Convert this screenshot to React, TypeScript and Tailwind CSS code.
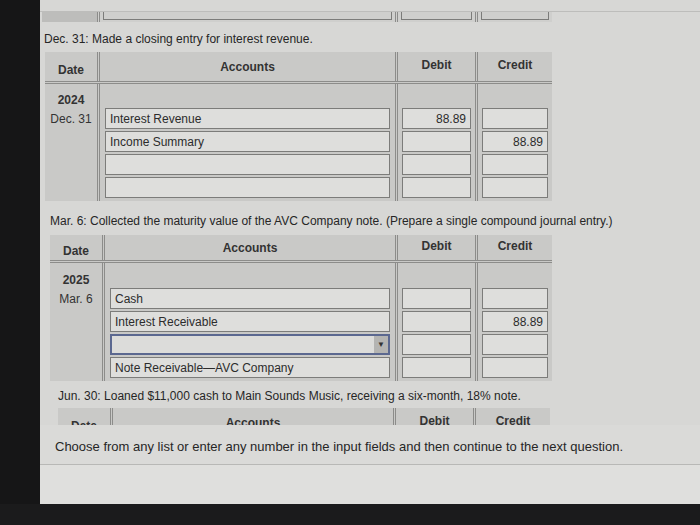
import React from "react";

type Row = { account?: string; debit?: string; credit?: string; select?: boolean };

const font = { fontFamily: '"Liberation Sans", Arial, sans-serif' };

function Field({ value, align = "left", select = false }: { value?: string; align?: "left" | "right"; select?: boolean }) {
  if (select) {
    return (
      <div className="flex h-[21px] w-full items-stretch border-2 border-[#5b6890] bg-[#dcdcda]">
        <div className="flex-1" />
        <div className="flex w-[14px] items-center justify-center bg-[#b4b4b2] text-[8px] text-[#333]">▼</div>
      </div>
    );
  }
  return (
    <div
      className={`flex h-[21px] w-full items-center border border-[#7c7c7a] bg-[#dededc] px-[4px] text-[12px] text-[#2c2c2c] ${
        align === "right" ? "justify-end" : "justify-start"
      }`}
    >
      {value}
    </div>
  );
}

function Header({ tall = false }: { tall?: boolean }) {
  return (
    <div
      className={`flex ${tall ? "h-[32px]" : "h-[28px]"} border-b-[3px] border-double border-[#8c8c8a] text-[12px] font-bold text-[#333]`}
    >
      <div className="flex w-[52px] items-center justify-center pt-[6px]">Date</div>
      <div className="flex flex-1 items-center justify-center border-l-[3px] border-double border-[#8c8c8a]">Accounts</div>
      <div className="flex w-[80px] items-center justify-center border-l-[3px] border-double border-[#8c8c8a] pb-[4px]">Debit</div>
      <div className="flex w-[77px] items-center justify-center border-l-[3px] border-double border-[#8c8c8a] pb-[4px]">Credit</div>
    </div>
  );
}

function Journal({
  year,
  date,
  rows,
  className,
  tall = false,
}: {
  year: string;
  date: string;
  rows: Row[];
  className: string;
  tall?: boolean;
}) {
  const top = tall ? "pt-[23px]" : "pt-[24px]";
  return (
    <div className={`bg-[#c9c9c7] ${className}`} style={font}>
      <Header tall={tall} />
      <div className="flex">
        <div className={`flex w-[52px] flex-col items-center text-[12px] text-[#333] ${tall ? "pt-[9px]" : "pt-[10px]"}`}>
          <div className="flex h-[14px] items-center font-bold">{year}</div>
          <div className="flex h-[23px] items-center">{date}</div>
        </div>
        <div className={`flex flex-1 flex-col border-l-[3px] border-double border-[#8c8c8a] px-[5px] pb-[2px] ${top}`}>
          {rows.map((r, i) => (
            <div key={i} className="flex h-[23px] items-center">
              <Field value={r.account} select={r.select} />
            </div>
          ))}
        </div>
        <div className={`flex w-[80px] flex-col border-l-[3px] border-double border-[#8c8c8a] px-[4px] pb-[2px] ${top}`}>
          {rows.map((r, i) => (
            <div key={i} className="flex h-[23px] items-center">
              <Field value={r.debit} align="right" />
            </div>
          ))}
        </div>
        <div className={`flex w-[77px] flex-col border-l-[3px] border-double border-[#8c8c8a] px-[4px] pb-[2px] ${top}`}>
          {rows.map((r, i) => (
            <div key={i} className="flex h-[23px] items-center">
              <Field value={r.credit} align="right" />
            </div>
          ))}
        </div>
      </div>
    </div>
  );
}

export default function App() {
  return (
    <div className="flex h-[525px] w-[700px] flex-col overflow-hidden bg-[#1b1b1c]" style={font}>
      <div className="flex h-[504px]">
        <div className="w-[40px] bg-[#161617]" />
        <div className="flex flex-1 flex-col bg-[#d7d7d5]">
          {/* cut-off table from the previous entry */}
          <div className="mt-[11px] h-px w-full bg-[#bdbdbb]" />
          <div className="ml-[2px] flex h-[10px] w-[510px] bg-[#cfcfcd]">
            <div className="w-[55px] bg-[#bdbdbb]" />
            <div className="flex-1 border-l-[3px] border-double border-[#8c8c8a] px-[3px]">
              <div className="h-[8px] border-b border-l border-r border-[#7c7c7a]" />
            </div>
            <div className="w-[80px] border-l-[3px] border-double border-[#8c8c8a] px-[3px]">
              <div className="h-[8px] border-b border-l border-r border-[#7c7c7a]" />
            </div>
            <div className="w-[77px] border-l-[3px] border-double border-[#8c8c8a] px-[3px]">
              <div className="h-[8px] border-b border-l border-r border-[#7c7c7a]" />
            </div>
          </div>

          <p className="ml-[4px] mt-[8px] text-[12px] text-[#262626]">Dec. 31: Made a closing entry for interest revenue.</p>
          <Journal
            tall
            className="ml-[5px] mt-[4px] w-[507px]"
            year="2024"
            date="Dec. 31"
            rows={[
              { account: "Interest Revenue", debit: "88.89" },
              { account: "Income Summary", credit: "88.89" },
              {},
              {},
            ]}
          />

          <p className="ml-[10px] mt-[11px] text-[12px] text-[#262626]">
            Mar. 6: Collected the maturity value of the AVC Company note. (Prepare a single compound journal entry.)
          </p>
          <Journal
            className="ml-[10px] mt-[5px] w-[502px]"
            year="2025"
            date="Mar. 6"
            rows={[
              { account: "Cash" },
              { account: "Interest Receivable", credit: "88.89" },
              { select: true },
              { account: "Note Receivable—AVC Company" },
            ]}
          />

          <p className="ml-[18px] mt-[6px] text-[12px] text-[#262626]">
            Jun. 30: Loaned $11,000 cash to Main Sounds Music, receiving a six-month, 18% note.
          </p>
          <div className="ml-[18px] mt-[3px] h-[17px] w-[492px] overflow-hidden bg-[#c9c9c7]">
            <Header tall />
          </div>

          <div className="flex flex-1 flex-col bg-[#dadad8]">
            <p className="ml-[15px] mt-[12px] text-[13px] text-[#262626]">
              Choose from any list or enter any number in the input fields and then continue to the next question.
            </p>
            <div className="mt-[7px] h-px bg-[#b8b8b6]" />
            <div className="flex-1 bg-[#dfdfdd]" />
          </div>
        </div>
      </div>
    </div>
  );
}
